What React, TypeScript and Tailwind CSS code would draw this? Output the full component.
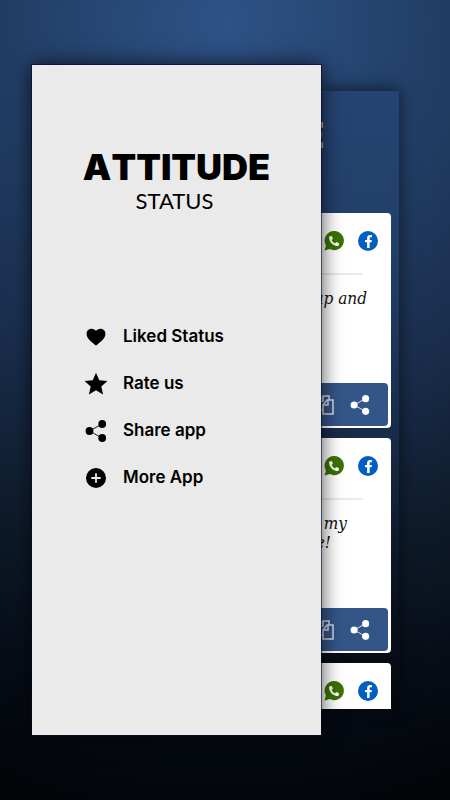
import type { ReactNode } from 'react'
import { FaFacebookF, FaPhoneAlt } from 'react-icons/fa'

type IconProps = { className?: string }

const HeartIcon = ({ className }: IconProps) => (
  <svg viewBox="0 0 20 20" fill="currentColor" className={className} aria-hidden="true">
    <path d="M10 18.600C7.300 16 1 12.200.6 7.400.3 4 2.600 1.800 5.400 1.800c2 0 3.700.9 4.600 2.300.9-1.400 2.600-2.300 4.600-2.300 2.800 0 5.100 2.200 4.800 5.600C19 12.200 12.700 16 10 18.600Z" />
  </svg>
)

const StarIcon = ({ className }: IconProps) => (
  <svg viewBox="0 0 24 24" fill="currentColor" className={className} aria-hidden="true">
    <path d="M12 .8l3.300 7.400 8.100.8-6.100 5.400 1.800 8L12 18.300l-7.100 4.100 1.800-8L.6 9l8.100-.8z" />
  </svg>
)

const ShareIcon = ({ className }: IconProps) => (
  <svg viewBox="0 0 22 22" fill="currentColor" className={className} aria-hidden="true">
    <path d="M17 4 4.500 11 17 18" fill="none" stroke="currentColor" strokeWidth="0.900" />
    <circle cx="4.500" cy="11" r="3.900" />
    <circle cx="17.200" cy="4" r="3.900" />
    <circle cx="17.200" cy="18" r="3.900" />
  </svg>
)

const PlusIcon = ({ className }: IconProps) => (
  <svg viewBox="0 0 20 20" className={className} aria-hidden="true">
    <circle cx="10" cy="10" r="10" fill="currentColor" />
    <path d="M10 5.300v9.400M5.300 10h9.400" stroke="#eaeaea" strokeWidth="1.800" />
  </svg>
)

const CopyIcon = ({ className }: IconProps) => (
  <svg viewBox="0 0 16 20" fill="none" stroke="currentColor" strokeWidth="1.500" className={className} aria-hidden="true">
    <path d="M5 15H1V6l4-5h6v4" />
    <path d="M1 6h4V1" />
    <path d="M5 10l4-5h6v14H5z" />
    <path d="M5 10h5V5" />
  </svg>
)

const WhatsappIcon = () => (
  <span className="grid size-5 shrink-0 place-items-center text-[#3b7300]">
    <svg viewBox="0 0 20 20" fill="currentColor" className="col-start-1 row-start-1 size-5" aria-hidden="true">
      <path d="M10.300 0a9.600 9.600 0 1 1-4.500 18.100L.5 19.600l1.400-5.200A9.600 9.600 0 0 1 10.300 0Z" />
    </svg>
    <FaPhoneAlt className="col-start-1 row-start-1 size-[10px] text-white" />
  </span>
)

const FacebookIcon = () => (
  <span className="grid size-5 shrink-0 place-items-center rounded-full bg-[#005fc0]">
    <FaFacebookF className="size-[13px] text-white" />
  </span>
)

const menuItems: { label: string; icon: ReactNode }[] = [
  { label: 'Liked Status', icon: <HeartIcon className="size-5" /> },
  { label: 'Rate us', icon: <StarIcon className="size-6" /> },
  { label: 'Share app', icon: <ShareIcon className="size-[22px]" /> },
  { label: 'More App', icon: <PlusIcon className="size-5" /> },
]

const CardHeader = () => (
  <div className="flex justify-end gap-[14px] pt-[18px] pr-[13px]">
    <button type="button" aria-label="Share on WhatsApp">
      <WhatsappIcon />
    </button>
    <button type="button" aria-label="Share on Facebook">
      <FacebookIcon />
    </button>
  </div>
)

const StatusCard = ({ children }: { children: ReactNode }) => (
  <article className="flex h-[215px] flex-col rounded-r bg-white">
    <CardHeader />
    <hr className="mt-[22px] mr-7 border-t-2 border-[#ebebeb]" />
    <div className="mt-[14px] font-['DejaVu_Serif_Condensed','DejaVu_Serif',serif] text-[17px] leading-[19px] whitespace-nowrap text-[#111] italic">
      {children}
    </div>

    {/* actions */}
    <div className="mt-auto mr-[3px] mb-0.5 flex h-[43px] items-center justify-end gap-4 rounded-r-sm bg-[#345587] pr-[18px] text-white">
      <button type="button" aria-label="Copy" className="shrink-0 text-[#d5dce8]">
        <CopyIcon className="h-5 w-4" />
      </button>
      <button type="button" aria-label="Share" className="shrink-0">
        <ShareIcon className="size-5" />
      </button>
    </div>
  </article>
)

const App = () => {
  return (
    <main className="grid min-h-screen grid-cols-[289fr_78fr] bg-[radial-gradient(ellipse_150%_100%_at_50%_3%,#2e5286_0%,#233f68_30%,#1a2e4d_50%,#0e1a29_70%,#070d17_85%,#020408_100%)] py-[65px] pr-[51px] pl-8 font-['Inter',sans-serif]">
      {/* DRAWER */}
      <aside className="z-10 min-w-0 bg-[#eaeaea] text-black shadow-[0_0_0_1px_rgba(5,10,40,0.6),0_0_20px_rgba(0,0,0,0.75)]">
        <header className="flex flex-col items-center pt-[82px]">
          <h1 className="text-[36px] leading-10 font-black [font-kerning:none]">ATTITUDE</h1>
          <p className="pr-1 font-['Lato',sans-serif] text-[22px] leading-7">STATUS</p>
        </header>

        <nav className="pt-[98px] pl-[52px]">
          <ul>
            {menuItems.map((item) => (
              <li key={item.label}>
                <button type="button" className="flex h-[47px] items-center gap-[15px] text-[17px] font-semibold">
                  <span className="flex w-6 justify-center">{item.icon}</span>
                  <span>{item.label}</span>
                </button>
              </li>
            ))}
          </ul>
        </nav>
      </aside>

      {/* STATUS LIST */}
      <section className="my-[26px] flex min-w-0 flex-col gap-[10px] overflow-hidden bg-[linear-gradient(180deg,#264473_0%,#223f68_25%,#182c49_55%,#0a1320_80%,#05080d_100%)] pr-2 shadow-[0_-2px_16px_rgba(0,0,0,0.6)]">
        <div className="flex h-[112px] justify-end pt-6 pr-[67px]">
          <h2 className="text-[36px] leading-10 font-black text-[#f3ead8]">E</h2>
        </div>

        <StatusCard>
          <p className="flex justify-end pr-6">up and</p>
        </StatusCard>

        <StatusCard>
          <p className="flex justify-end pr-11">my</p>
          <p className="flex justify-end pr-[60px]">e!</p>
        </StatusCard>

        <article className="flex-1 rounded-tr bg-white">
          <CardHeader />
        </article>
      </section>
    </main>
  )
}

export default App
